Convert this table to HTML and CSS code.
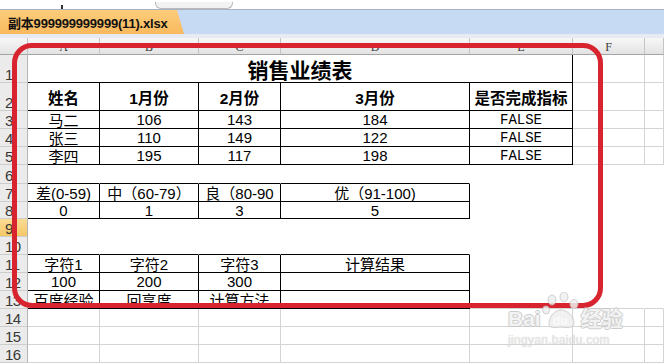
FILE: index.html
```html
<!DOCTYPE html>
<html lang="zh">
<head>
<meta charset="utf-8">
<title>销售业绩表</title>
<link rel="stylesheet" href="styles.css">
</head>
<body>
<div class="page">
  <div class="top"><span class="frag1"></span><span class="frag2"></span></div>
  <div class="tabs"><div class="tab">副本999999999999(11).xlsx</div></div>
  <div class="gap"></div>
  <div class="sheet">
    <div class="ch"></div><div class="ch">A</div><div class="ch">B</div><div class="ch">C</div><div class="ch">D</div><div class="ch">E</div><div class="ch">F</div><div class="ch"></div>

    <div class="rh">1</div><div class="t title">销售业绩表</div><div></div><div></div>

    <div class="rh">2</div><div class="t hd">姓名</div><div class="t hd">1月份</div><div class="t hd">2月份</div><div class="t hd">3月份</div><div class="t hd">是否完成指标</div><div></div><div></div>
    <div class="rh">3</div><div class="t">马二</div><div class="t">106</div><div class="t">143</div><div class="t">184</div><div class="t mono">FALSE</div><div></div><div></div>
    <div class="rh">4</div><div class="t">张三</div><div class="t">110</div><div class="t">149</div><div class="t">122</div><div class="t mono">FALSE</div><div></div><div></div>
    <div class="rh">5</div><div class="t">李四</div><div class="t">195</div><div class="t">117</div><div class="t">198</div><div class="t mono">FALSE</div><div></div><div></div>

    <div class="rh">6</div><div class="xr bb"></div><div class="xr bb"></div><div class="xr bb"></div><div class="xr bb"></div><div class="xr xb"></div><div class="xr xb"></div><div class="xr xb"></div>
    <div class="rh">7</div><div class="t">差(0-59)</div><div class="t">中（60-79）</div><div class="t">良（80-90</div><div class="t">优（91-100)</div><div class="xr xb"></div><div class="xr xb"></div><div class="xr xb"></div>
    <div class="rh">8</div><div class="t">0</div><div class="t">1</div><div class="t">3</div><div class="t">5</div><div class="xr xb"></div><div class="xr xb"></div><div class="xr xb"></div>
    <div class="rh sel">9</div><div class="xr xb"></div><div class="xr xb"></div><div class="xr xb"></div><div class="xr xb"></div><div class="xr xb"></div><div class="xr xb"></div><div class="xr xb"></div>
    <div class="rh">10</div><div class="xr bb"></div><div class="xr bb"></div><div class="xr bb"></div><div class="xr bb"></div><div class="xr xb"></div><div class="xr xb"></div><div class="xr xb"></div>
    <div class="rh">11</div><div class="t">字符1</div><div class="t">字符2</div><div class="t">字符3</div><div class="t">计算结果</div><div class="xr xb"></div><div class="xr xb"></div><div class="xr xb"></div>
    <div class="rh">12</div><div class="t">100</div><div class="t">200</div><div class="t">300</div><div class="t"></div><div class="xr xb"></div><div class="xr xb"></div><div class="xr xb"></div>
    <div class="rh">13</div><div class="t">百度经验</div><div class="t">回享度</div><div class="t">计算方法</div><div class="t"></div><div class="xr"></div><div class="xr"></div><div class="xr"></div>

    <div class="rh">14</div><div></div><div></div><div></div><div></div><div></div><div></div><div></div>
    <div class="rh">15</div><div></div><div></div><div></div><div></div><div></div><div></div><div></div>
    <div class="rh">16</div><div></div><div></div><div></div><div></div><div></div><div></div><div></div>
  </div>

  <div class="frame"></div>

  <div class="wm">
    <div class="wm-logo">
      <span class="wm-t">Bai</span>
      <svg class="paw" width="40" height="38" viewBox="0 0 40 38">
        <g fill="#efefef" stroke="#c8c8c8" stroke-width="1">
          <ellipse cx="11" cy="8" rx="4" ry="5"/>
          <ellipse cx="23" cy="5" rx="4" ry="5"/>
          <ellipse cx="33" cy="12" rx="4" ry="4.5"/>
          <ellipse cx="5" cy="18" rx="3.5" ry="4"/>
          <path d="M8 32 C8 24 14 18 20 18 C27 18 33 25 33 31 C33 36 27 36 20 35 C13 36 8 36 8 32 Z"/>
        </g>
        <text x="12" y="33" class="du">du</text>
      </svg>
      <span class="wm-t">经验</span>
    </div>
    <div class="wm-url">jingyan.baidu.com</div>
  </div>
</div>
</body>
</html>
```

FILE: styles.css
```css
:root {
  --g: #d4d4d4;
}
html, body {
  margin: 0;
  padding: 0;
  background: #fff;
  overflow: hidden;
}
.page {
  position: relative;
  width: 664px;
  height: 364px;
  overflow: hidden;
  font-family: "Liberation Sans", "Noto Sans CJK SC", sans-serif;
  display: flex;
  flex-direction: column;
}
.top {
  height: 9px;
  flex: none;
  border-bottom: 1px solid #a7b3c3;
  display: flex;
  align-items: flex-end;
  overflow: hidden;
}
.frag1 {
  margin-left: 61px;
  width: 2px;
  height: 4px;
  background: #333;
}
.frag2 {
  margin-left: 92px;
  width: 76px;
  height: 6px;
  border: 1px solid #b9b9b9;
  border-top: none;
  border-radius: 0 0 6px 6px;
  background: #f2f2f2;
}
.tabs {
  height: 24px;
  flex: none;
  background: #c6daf4;
  display: flex;
}
.tab {
  width: 184px;
  box-sizing: border-box;
  padding-left: 8px;
  display: flex;
  align-items: center;
  background: linear-gradient(#fccd7b, #f9b95d);
  clip-path: polygon(0 0, 177px 0, 184px 100%, 0 100%);
  font-weight: bold;
  font-size: 13px;
  color: #111;
  letter-spacing: -0.2px;
}
.gap {
  height: 4px;
  flex: none;
  background: #e7ebf1;
}
.sheet {
  flex: none;
  display: grid;
  grid-template-columns: 28px 72px 99px 82px 189px 103px 72px 19px;
  grid-template-rows: 17px 28px 28px 18px 18px 18px 19px 18px 17px repeat(8, 18px);
}
.sheet > div {
  box-sizing: border-box;
  border-right: 1px solid var(--g);
  border-bottom: 1px solid var(--g);
  display: flex;
  align-items: center;
  justify-content: center;
  white-space: nowrap;
  overflow: hidden;
  font-size: 15px;
  color: #000;
  background: #fff;
}
.sheet > .ch {
  background: linear-gradient(#f7f7f7, #e3e3e3);
  border-right-color: #c4c4c4;
  border-bottom-color: #a4a4a4;
  font-family: "Liberation Serif", serif;
  font-size: 12px;
  color: #3a3a3a;
  align-items: flex-end;
  line-height: 14px;
}
.sheet > .rh {
  background: #ebebeb;
  border-right-color: #b5b5b5;
  border-bottom-color: #cdcdcd;
  justify-content: flex-start;
  align-items: flex-end;
  padding-left: 5px;
  font-size: 15px;
  line-height: 15px;
  color: #383838;
  letter-spacing: -0.5px;
}
.sheet > .rh.sel {
  background: linear-gradient(#fadc95, #f4c765);
}
.sheet > .t {
  border-right-color: #000;
  border-bottom-color: #000;
}
.sheet > .bb {
  border-bottom-color: #000;
}
.sheet > .xr {
  border-right-color: transparent;
}
.sheet > .xb {
  border-bottom-color: transparent;
}
.sheet > .title {
  grid-column: span 5;
  font-size: 21px;
  font-weight: bold;
}
.sheet > .hd {
  font-weight: bold;
  font-size: 15.5px;
}
.sheet > .mono {
  font-family: "Liberation Mono", monospace;
  font-size: 14px;
}
.frame {
  position: absolute;
  left: 12px;
  top: 43px;
  width: 591px;
  height: 265px;
  box-sizing: border-box;
  border: 5px solid #d8242e;
  border-radius: 20px;
}
.wm {
  position: absolute;
  left: 508px;
  top: 292px;
  display: flex;
  flex-direction: column;
  align-items: flex-start;
  opacity: 0.85;
}
.wm-logo {
  display: flex;
  align-items: flex-end;
  height: 38px;
}
.wm-t {
  font-size: 21px;
  font-weight: bold;
  color: #f1f1f1;
  text-shadow: 1px 0 #c4c4c4, -1px 0 #c4c4c4, 0 1px #c4c4c4, 0 -1px #c4c4c4;
  line-height: 20px;
  margin-bottom: 1px;
}
.paw {
  display: block;
}
.du {
  font-family: "Liberation Sans", sans-serif;
  font-size: 12px;
  font-weight: bold;
  fill: #fafafa;
}
.wm-url {
  margin-top: 3px;
  font-size: 12px;
  color: #e6e6e6;
  text-shadow: 0 0 1px #bdbdbd;
  letter-spacing: 0.3px;
}
```
